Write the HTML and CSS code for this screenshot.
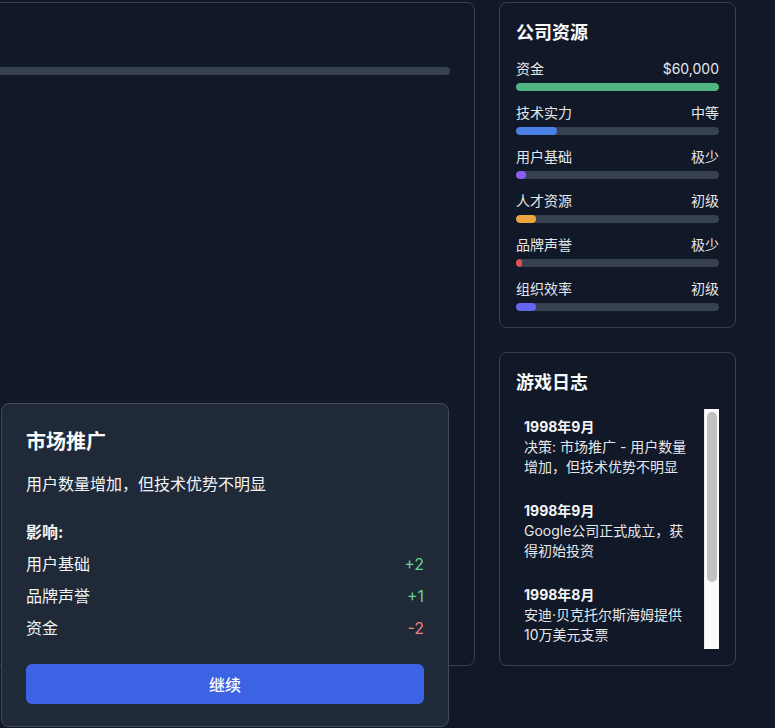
FILE: index.html
```html
<!DOCTYPE html>
<html lang="zh-CN">
<head>
<meta charset="utf-8">
<title>游戏</title>
<link rel="stylesheet" href="styles.css">
</head>
<body>
<div class="layout">
  <section class="main-panel">
    <div class="main-header"></div>
    <div class="progress-track"></div>
  </section>
  <aside class="sidebar">
    <section class="card">
      <h2 class="card-title">公司资源</h2>
      <div class="res">
        <div class="res-row"><span>资金</span><span>$60,000</span></div>
        <div class="track"><div class="fill green" style="width:100%"></div></div>
      </div>
      <div class="res">
        <div class="res-row"><span>技术实力</span><span>中等</span></div>
        <div class="track"><div class="fill blue" style="width:20%"></div></div>
      </div>
      <div class="res">
        <div class="res-row"><span>用户基础</span><span>极少</span></div>
        <div class="track"><div class="fill purple" style="width:5%"></div></div>
      </div>
      <div class="res">
        <div class="res-row"><span>人才资源</span><span>初级</span></div>
        <div class="track"><div class="fill orange" style="width:10%"></div></div>
      </div>
      <div class="res">
        <div class="res-row"><span>品牌声誉</span><span>极少</span></div>
        <div class="track"><div class="fill red" style="width:3%"></div></div>
      </div>
      <div class="res">
        <div class="res-row"><span>组织效率</span><span>初级</span></div>
        <div class="track"><div class="fill indigo" style="width:10%"></div></div>
      </div>
    </section>
    <section class="card log-card">
      <h2 class="card-title">游戏日志</h2>
      <div class="log-wrap">
        <div class="log">
          <div class="entry">
            <div class="date">1998年9月</div>
            <div class="text">决策: 市场推广 - 用户数量增加，但技术优势不明显</div>
          </div>
          <div class="entry">
            <div class="date">1998年9月</div>
            <div class="text">Google公司正式成立，获得初始投资</div>
          </div>
          <div class="entry">
            <div class="date">1998年8月</div>
            <div class="text">安迪·贝克托尔斯海姆提供10万美元支票</div>
          </div>
        </div>
        <div class="scrollbar"><div class="thumb"></div></div>
      </div>
    </section>
  </aside>
</div>

<div class="modal">
  <h3 class="modal-title">市场推广</h3>
  <p class="modal-desc">用户数量增加，但技术优势不明显</p>
  <div class="impact-title">影响:</div>
  <div class="impact-row"><span>用户基础</span><span class="pos">+2</span></div>
  <div class="impact-row"><span>品牌声誉</span><span class="pos">+1</span></div>
  <div class="impact-row"><span>资金</span><span class="neg">-2</span></div>
  <button class="btn">继续</button>
</div>
</body>
</html>
```

FILE: styles.css
```css
* { box-sizing: border-box; }
html, body {
  margin: 0;
  padding: 0;
  background: #111827;
  overflow: hidden;
  height: 728px;
}
body {
  font-family: Inter, "Noto Sans CJK SC", sans-serif;
  color: #f3f4f6;
}
.layout {
  display: flex;
  gap: 24px;
  padding-top: 2px;
  align-items: stretch;
}
.main-panel {
  flex: none;
  width: 775px;
  margin-left: -300px;
  border: 1px solid #374151;
  border-radius: 8px;
  padding: 24px;
}
.main-header { height: 40px; }
.progress-track {
  height: 8px;
  background: #374151;
  border-radius: 999px;
}
.sidebar {
  flex: none;
  width: 237px;
  display: flex;
  flex-direction: column;
  gap: 24px;
}
.card {
  border: 1px solid #374151;
  border-radius: 8px;
  padding: 16px;
}
.card-title {
  margin: 0 0 12px;
  font-size: 18px;
  line-height: 28px;
  font-weight: 700;
  color: #f9fafb;
}
.res + .res { margin-top: 12px; }
.res-row {
  display: flex;
  justify-content: space-between;
  font-size: 14px;
  line-height: 20px;
  color: #e5e7eb;
  margin-bottom: 4px;
}
.track {
  height: 8px;
  background: #374151;
  border-radius: 999px;
  overflow: hidden;
}
.fill { height: 100%; border-radius: 999px; }
.green { background: #4fb581; }
.blue { background: #4a7fe6; }
.purple { background: #8b5cf6; }
.orange { background: #eba53a; }
.red { background: #e0504f; }
.indigo { background: #6366f1; }

.log-wrap {
  display: flex;
  height: 240px;
}
.log {
  flex: 1;
  min-width: 0;
  overflow: hidden;
}
.scrollbar {
  flex: none;
  width: 15px;
  background: #fafafa;
  border-left: 1px solid #ededed;
  padding: 3px 2px 0 2px;
}
.thumb {
  height: 170px;
  background: #c1c1c1;
  border-radius: 6px;
}
.entry {
  padding: 8px;
  font-size: 14px;
  line-height: 20px;
}
.entry + .entry { margin-top: 8px; }
.date { font-weight: 700; color: #f3f4f6; }
.text { color: #e5e7eb; }

.modal {
  position: fixed;
  left: 1px;
  top: 403px;
  width: 448px;
  height: 324px;
  background: #1f2937;
  border: 1px solid #434b59;
  border-radius: 8px;
  padding: 24px;
}
.modal-title {
  margin: 0 0 16px;
  font-size: 20px;
  line-height: 28px;
  font-weight: 700;
  color: #f9fafb;
}
.modal-desc {
  margin: 0 0 24px;
  font-size: 16px;
  line-height: 24px;
  color: #f3f4f6;
}
.impact-title {
  font-size: 16px;
  line-height: 24px;
  font-weight: 700;
  margin-bottom: 8px;
}
.impact-row {
  display: flex;
  justify-content: space-between;
  font-size: 16px;
  line-height: 24px;
  color: #f3f4f6;
}
.impact-row + .impact-row { margin-top: 8px; }
.pos { color: #68d391; }
.neg { color: #f08080; }
.btn {
  display: block;
  width: 100%;
  height: 40px;
  margin-top: 24px;
  border: none;
  border-radius: 6px;
  background: #3b63e3;
  color: #ffffff;
  font-family: Inter, "Noto Sans CJK SC", sans-serif;
  font-size: 16px;
  font-weight: 500;
}
```
